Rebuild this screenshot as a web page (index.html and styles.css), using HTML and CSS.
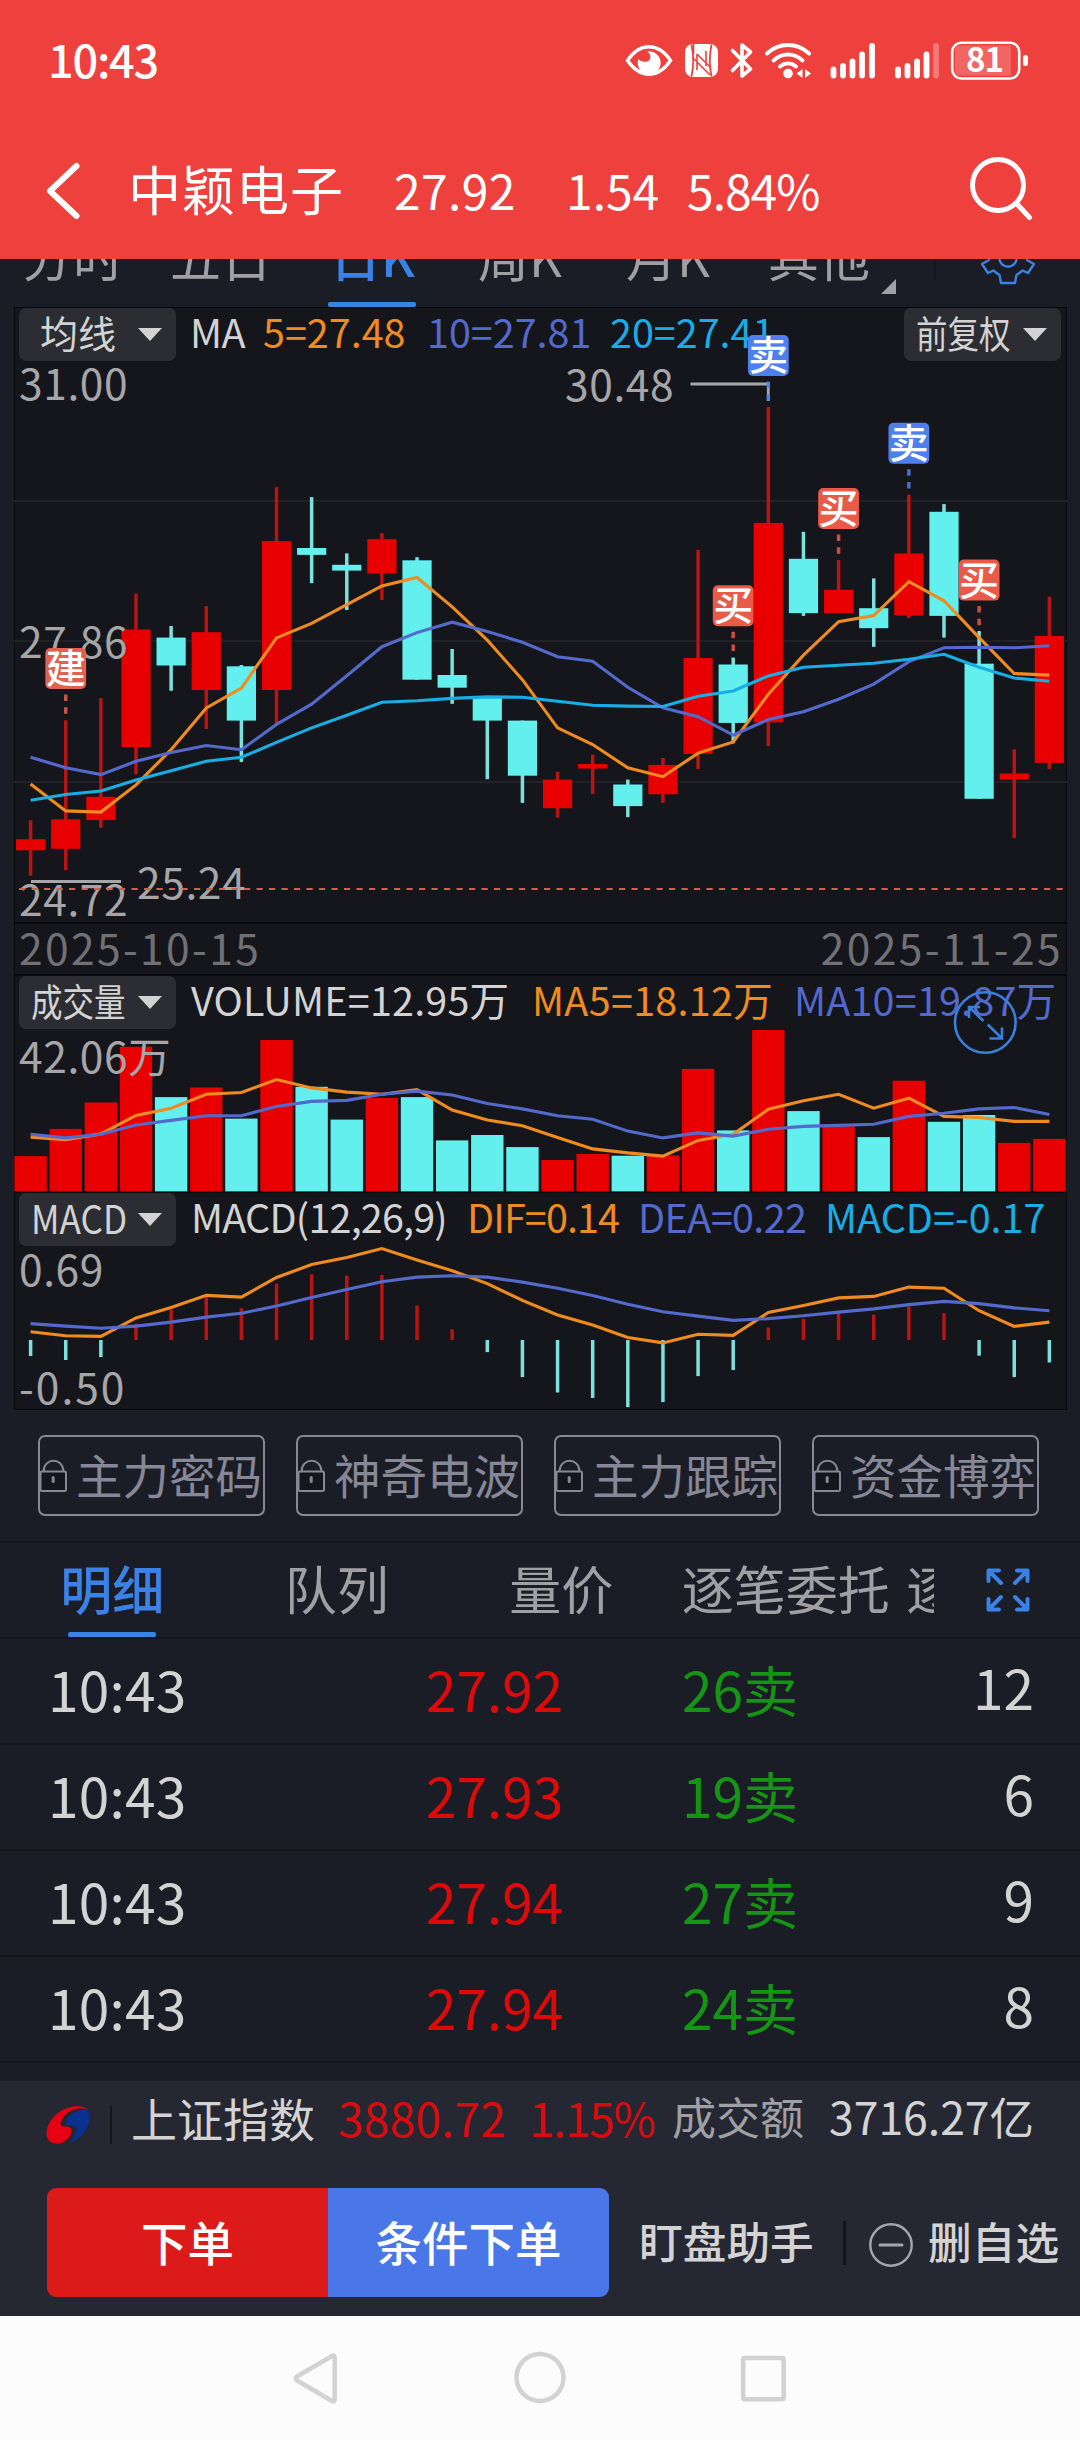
FILE: index.html
```html
<!DOCTYPE html>
<html lang="zh-CN">
<head>
    <meta charset="UTF-8">
    <meta name="viewport" content="width=1080">
    <title>中颖电子 日K</title>
    <link rel="stylesheet" href="styles.css">
</head>
<body>
    <div class="phone">
        <header class="header">
            <div class="status-bar">
                <span class="clock">10:43</span>
                <svg class="status-icons" width="410" height="44" viewBox="620 38 410 44">
                    <!-- eye comfort -->
                    <path d="M627.5 60.5C634 51 641 46.800 649 46.800S664 51 670.500 60.500C664 70 657 74.200 649 74.200S634 70 627.500 60.500Z" fill="none" stroke="#fff" stroke-width="3.400"/>
                    <path d="M647 51.500A11.500 11.500 0 1 1 638.300 59C641 62 647 63 649.500 60C651.500 57 650 53 647 51.500Z" fill="#fff"/>
                    <!-- nfc -->
                    <rect x="685" y="44" width="33" height="33" rx="8" fill="#fff"/>
                    <path d="M691.500 44.500C693.500 54 693.500 67 691.500 76.500M711.500 44.500C709.500 54 709.500 67 711.500 76.500" fill="none" stroke="#ee403d" stroke-width="1.800"/>
                    <path d="M697 54L710 67M693.500 54V44M697 54V70M706 51V66M693 58L710 75" fill="none" stroke="#ee403d" stroke-width="1.600"/>
                    <!-- bluetooth -->
                    <path d="M732.500 50.500L750.500 69L742 76V45L750.500 52L732.500 70.500" fill="none" stroke="#fff" stroke-width="3.600" stroke-linejoin="round" stroke-linecap="round"/>
                    <!-- wifi -->
                    <g fill="none" stroke="#fff" stroke-width="4" stroke-linecap="round">
                        <path d="M767 53.500C779 42 797 42 809 53.500"/>
                        <path d="M773.500 60.500C782 52.500 794 52.500 802.500 60.500"/>
                        <path d="M780 66.500C785 62.500 791 62.500 796 66.500"/>
                    </g>
                    <circle cx="788" cy="73.500" r="4.800" fill="#fff"/>
                    <path d="M802.500 69V78L796.500 73.500ZM805 69V78L811 73.500Z" fill="#fff"/>
                    <!-- signal 1 and 2 -->
                    <g stroke="#fff" stroke-width="5.800" stroke-linecap="round">
                        <path d="M833.500 69.500V75.500M843 66V75.500M852.500 61.500V75.500M862 54.500V75.500M872 46V75.500"/>
                        <path d="M898 69.500V75.500M907.500 66V75.500M917 61.500V75.500M926.500 54.500V75.500"/>
                        <path d="M936 46V75.500" opacity="0.3"/>
                    </g>
                    <!-- battery -->
                    <rect x="952.200" y="42.700" width="67" height="35.800" rx="9" fill="none" stroke="#fff" stroke-width="2.600"/>
                    <path d="M960 45.500H1011V75.500H960Q955 75.500 955 70.500V50.500Q955 45.500 960 45.500Z" fill="#fff" opacity="0.2"/>
                    <rect x="1023" y="55" width="5" height="11" rx="2.500" fill="#fff"/>
                    <text class="battery-text" x="984.500" y="72" text-anchor="middle">81</text>
                </svg>
            </div>
            <div class="title-bar">
                <svg class="back" width="36" height="60" viewBox="0 0 36 60"><path d="M31.500 5L5 30L31.500 55" fill="none" stroke="#fff" stroke-width="6" stroke-linecap="round" stroke-linejoin="round"/></svg>
                <h1 class="stock-name">中颖电子</h1>
                <span class="quote price">27.92</span>
                <span class="quote change">1.54</span>
                <span class="quote percent">5.84%</span>
                <svg class="search" width="68" height="68" viewBox="0 0 68 68"><g fill="none" stroke="#fff" stroke-width="5" stroke-linecap="round"><circle cx="30" cy="29" r="25.500"/><path d="M48.500 47.500L61.500 61.500"/></g></svg>
            </div>
        </header>

        <nav class="period-tabs">
            <span class="period p1">分时</span>
            <span class="period p2">五日</span>
            <span class="period p3 active">日K</span>
            <span class="period p4">周K</span>
            <span class="period p5">月K</span>
            <span class="period p6">其他</span>
            <i class="corner"></i>
            <i class="tab-line"></i>
            <svg class="gear" width="54" height="54" viewBox="-27 -27 54 54">
                <path d="M-7 25H7L8.500 17Q11 15.500 14.500 12.500L20 15L26 6L19 2V-2L26 -6L20 -15L14.500 -12.500Q11 -15.500 8.500 -17L7 -25H-7L-8.500 -17Q-11 -15.500 -14.500 -12.500L-20 -15L-26 -6L-19 -2V2L-26 6L-20 15L-14.500 12.500Q-11 15.500 -8.500 17Z" fill="none" stroke="#3b82e6" stroke-width="2.400" stroke-linejoin="round"/>
                <circle r="8.700" fill="none" stroke="#3b82e6" stroke-width="2.400"/>
            </svg>
        </nav>

        <section class="chart">
            <div class="panel panel-price">
                <div class="panel-head">
                    <button class="dropdown dropdown-ma"><span>均线</span><i class="caret"></i></button>
                    <span class="legend light ma-title">MA</span>
                    <span class="legend orange ma-5">5=27.48</span>
                    <span class="legend indigo ma-10">10=27.81</span>
                    <span class="legend sky">20=27.41</span>
                    <button class="dropdown dropdown-right"><span class="narrow">前复权</span><i class="caret"></i></button>
                </div>
            </div>
            <div class="dates"><span>2025-10-15</span><span class="date-end">2025-11-25</span></div>
            <div class="panel panel-volume">
                <div class="panel-head">
                    <button class="dropdown"><span class="narrow">成交量</span><i class="caret"></i></button>
                    <span class="legend light vol-title">VOLUME=12.95万</span>
                    <span class="legend orange vol-5">MA5=18.12万</span>
                    <span class="legend indigo vol-10">MA10=19.87万</span>
                </div>
            </div>
            <div class="panel panel-macd">
                <div class="panel-head">
                    <button class="dropdown"><span class="narrow macd-name">MACD</span><i class="caret"></i></button>
                    <span class="legend light macd-title">MACD(12,26,9)</span>
                    <span class="legend orange macd-dif">DIF=0.14</span>
                    <span class="legend indigo macd-dea">DEA=0.22</span>
                    <span class="legend sky macd-val">MACD=-0.17</span>
                </div>
            </div>
            <svg id="plot" class="plot" width="1080" height="1103" viewBox="0 307 1080 1103"></svg>
        </section>

        <div class="locked">
            <div class="locked-item"><svg class="lock" width="29" height="34" viewBox="0 0 29 34"><path d="M4.500 12.500C5 -2 24 -2 24.500 12.500" fill="none" stroke="#868797" stroke-width="2"/><rect x="1.500" y="12.500" width="25.500" height="19.500" rx="1.500" fill="#15161b" stroke="#868797" stroke-width="2"/><path d="M14.200 18.500V22.500" stroke="#868797" stroke-width="3" stroke-linecap="round"/></svg><span>主力密码</span></div>
            <div class="locked-item"><svg class="lock" width="29" height="34" viewBox="0 0 29 34"><path d="M4.500 12.500C5 -2 24 -2 24.500 12.500" fill="none" stroke="#868797" stroke-width="2"/><rect x="1.500" y="12.500" width="25.500" height="19.500" rx="1.500" fill="#15161b" stroke="#868797" stroke-width="2"/><path d="M14.200 18.500V22.500" stroke="#868797" stroke-width="3" stroke-linecap="round"/></svg><span>神奇电波</span></div>
            <div class="locked-item"><svg class="lock" width="29" height="34" viewBox="0 0 29 34"><path d="M4.500 12.500C5 -2 24 -2 24.500 12.500" fill="none" stroke="#868797" stroke-width="2"/><rect x="1.500" y="12.500" width="25.500" height="19.500" rx="1.500" fill="#15161b" stroke="#868797" stroke-width="2"/><path d="M14.200 18.500V22.500" stroke="#868797" stroke-width="3" stroke-linecap="round"/></svg><span>主力跟踪</span></div>
            <div class="locked-item"><svg class="lock" width="29" height="34" viewBox="0 0 29 34"><path d="M4.500 12.500C5 -2 24 -2 24.500 12.500" fill="none" stroke="#868797" stroke-width="2"/><rect x="1.500" y="12.500" width="25.500" height="19.500" rx="1.500" fill="#15161b" stroke="#868797" stroke-width="2"/><path d="M14.200 18.500V22.500" stroke="#868797" stroke-width="3" stroke-linecap="round"/></svg><span>资金博弈</span></div>
        </div>

        <nav class="detail-tabs">
            <div class="detail-scroll">
                <span class="detail active">明细</span>
                <span class="detail">队列</span>
                <span class="detail">量价</span>
                <span class="detail">逐笔委托</span>
                <span class="detail">逐笔成交</span>
            </div>
            <svg class="expand" width="44" height="44" viewBox="0 0 44 44">
                <g fill="none" stroke="#3b82e6" stroke-width="4" stroke-linecap="round" stroke-linejoin="round">
                    <path d="M2.500 13V2.500H13M3 3L15 15M31 2.500H41.500V13M41 3L29 15M2.500 31V41.500H13M3 41L15 29M31 41.500H41.500V31M41 41L29 29"/>
                </g>
            </svg>
        </nav>

        <div class="trades">
            <div class="trade"><span class="time">10:43</span><span class="deal">27.92</span><span class="side">26卖</span><span class="count">12</span></div>
            <div class="trade"><span class="time">10:43</span><span class="deal">27.93</span><span class="side">19卖</span><span class="count">6</span></div>
            <div class="trade"><span class="time">10:43</span><span class="deal">27.94</span><span class="side">27卖</span><span class="count">9</span></div>
            <div class="trade"><span class="time">10:43</span><span class="deal">27.94</span><span class="side">24卖</span><span class="count">8</span></div>
        </div>

        <footer class="footer">
            <div class="index-bar">
                <svg class="logo" width="44" height="40" viewBox="0 0 44 40">
                    <path d="M42 5C37 -1 22 0 12 8C3 15 -1 25 1 32C4 41 18 41 24 31C27 25 25 21 20 21.500C14 22 13 19 17 13C22 5 33 1 42 5Z" fill="#e60012"/>
                    <path d="M42 5C35 3 24 8 20.500 15C19 20 22 21 27 20.500C32 21 32 27 24 38C35 34 43 23 43.500 14C43.500 10 43 7 42 5Z" fill="#0a318f"/>
                </svg>
                <i class="index-line"></i>
                <span class="index-name">上证指数</span>
                <span class="index-value">3880.72</span>
                <span class="index-pct">1.15%</span>
                <span class="turnover-name">成交额</span>
                <span class="turnover">3716.27亿</span>
            </div>
            <div class="action-bar">
                <button class="action buy">下单</button>
                <button class="action condition">条件下单</button>
                <span class="link watch">盯盘助手</span>
                <i class="action-line"></i>
                <svg class="minus" width="44" height="44" viewBox="0 0 44 44"><g fill="none" stroke="#a5a5aa" stroke-width="2.400" stroke-linecap="round"><circle cx="22" cy="22" r="20.700"/><path d="M11 22H33" stroke-width="3"/></g></svg>
                <span class="link">删自选</span>
            </div>
        </footer>

        <div class="system-nav">
            <svg width="1080" height="124" viewBox="0 2316 1080 124">
                <g fill="none" stroke="#d2d2d2" stroke-width="4.500" stroke-linejoin="round">
                    <path d="M332 2356Q334.700 2354.500 334.700 2357.500V2399.500Q334.700 2402.500 332 2401L297 2380.500Q294.500 2378.500 297 2376.500Z"/>
                    <circle cx="540" cy="2377.500" r="23.500"/>
                    <rect x="743.200" y="2358" width="40.500" height="41.200" rx="1.500"/>
                </g>
            </svg>
        </div>
    </div>
    <script src="chart.js"></script>
</body>
</html>
```
FILE: styles.css
```css
* {
    margin: 0;
    padding: 0;
    box-sizing: border-box;
}

body {
    background: #1b1d26;
    font-family: "Noto Sans CJK SC", "Noto Sans", sans-serif;
    color: #d3d3d3;
}

button {
    border: none;
    font-family: inherit;
    color: inherit;
}

svg {
    display: block;
    flex: none;
}

.phone {
    width: 1080px;
    height: 2440px;
    overflow: hidden;
    display: flex;
    flex-direction: column;
    white-space: nowrap;
}

/* header */
.header {
    height: 259px;
    background: #ee403d;
    color: #fff;
    flex: none;
}

.status-bar {
    height: 122px;
    padding: 0 50px 0 48px;
    display: flex;
    align-items: center;
    justify-content: space-between;
}

.clock {
    font-size: 45px;
    font-weight: 500;
    line-height: 60px;
    padding-bottom: 5px;
    letter-spacing: -1.2px;
}

.status-icons {
    margin-top: -2px;
}

.battery-text {
    font-size: 33px;
    font-weight: 700;
    letter-spacing: -1px;
    fill: #fff;
}

.title-bar {
    height: 137px;
    display: flex;
    align-items: center;
    padding-left: 45px;
}

.back {
    margin-right: 47px;
}

.stock-name {
    font-size: 53px;
    font-weight: 400;
    line-height: 60px;
    letter-spacing: 1px;
    width: 266px;
    padding-bottom: 5px;
}

.quote {
    font-size: 48px;
    line-height: 60px;
    padding-bottom: 4px;
}

.price {
    width: 172px;
    letter-spacing: 0.4px;
}

.change {
    width: 121px;
}

.percent {
    width: 281px;
    letter-spacing: -1px;
}

.search {
    margin-top: -2px;
}

/* k-line period tabs, scrolled halfway under the header */
.period-tabs {
    height: 48px;
    flex: none;
    display: flex;
    overflow: hidden;
    color: #a0a0a4;
    font-size: 51px;
}

.period {
    position: relative;
    height: 48px;
    flex: none;
    display: flex;
    align-items: flex-end;
    line-height: 64px;
    padding-bottom: 20px;
}

.p1 { width: 150px; padding-left: 22px; }
.p2 { width: 180px; padding-left: 20px; }
.p3 { width: 148px; }
.p4 { width: 148px; }
.p5 { width: 142px; }
.p6 { width: 113px; }

.active {
    color: #3b82e6;
    font-weight: 500;
}

.period.active::after {
    content: "";
    position: absolute;
    left: -2px;
    bottom: 0;
    width: 88px;
    height: 5px;
    border-radius: 2px;
    background: #3b82e6;
}

.corner {
    margin-top: 20px;
    border-left: 15px solid transparent;
    border-bottom: 15px solid #a0a0a4;
    height: 0;
    flex: none;
}

.tab-line {
    width: 2px;
    height: 21px;
    margin-left: 38px;
    background: #15161b;
}

.gear {
    margin: -28px 0 0 45px;
}

/* chart */
.chart {
    position: relative;
    width: 1053px;
    height: 1103px;
    margin: 0 0 0 14px;
    border: 1px solid #08090c;
    background: #15161b;
    flex: none;
}

.panel-price {
    height: 614px;
}

.dates {
    height: 54px;
    border-top: 2px solid #08090c;
    border-bottom: 2px solid #08090c;
    display: flex;
    justify-content: space-between;
    padding: 0 3px 0 4px;
    font-size: 42.500px;
    line-height: 45px;
    letter-spacing: 2.400px;
    color: #717175;
}

.panel-volume {
    height: 217px;
    border-bottom: 2px solid #08090c;
}

.panel-head {
    display: flex;
    align-items: center;
    height: 53px;
    padding-left: 4px;
}

.dropdown {
    width: 157px;
    height: 53px;
    border-radius: 7px;
    background: #2c2d32;
    color: #d3d3d3;
    display: flex;
    align-items: center;
    padding-left: 12px;
    font-size: 38px;
    line-height: 44px;
    flex: none;
}

.dropdown span {
    width: 107px;
    padding-bottom: 5px;
    text-align: left;
}

.dropdown-ma {
    padding-left: 21px;
}

.dropdown-ma span {
    width: 98px;
}

.dropdown .narrow {
    transform: scaleX(0.83);
    transform-origin: 0 50%;
}

.dropdown .macd-name {
    font-size: 39.500px;
    transform: scaleX(0.89);
}

.dropdown-right {
    margin-left: auto;
    margin-right: 5px;
}

.caret {
    border-left: 12.500px solid transparent;
    border-right: 12.500px solid transparent;
    border-top: 13px solid #d3d3d3;
}

.legend {
    font-size: 39.500px;
    line-height: 44px;
    padding-bottom: 7px;
    flex: none;
}

.light { color: #d3d3d3; }
.orange { color: #ef8b1f; }
.indigo { color: #5369cc; }
.sky { color: #19ade6; }

.ma-title {
    width: 73px;
    margin-left: 14px;
    letter-spacing: -0.500px;
}

.ma-5 {
    width: 164px;
}

.ma-10 {
    width: 183px;
}

.vol-title {
    width: 341px;
    margin-left: 15px;
    letter-spacing: 0.200px;
}

.vol-5 {
    width: 262px;
    letter-spacing: 0.300px;
}

.vol-10 {
    letter-spacing: 0.200px;
}

.macd-title {
    width: 276px;
    margin-left: 15px;
    letter-spacing: -0.800px;
}

.macd-dif {
    width: 171px;
    letter-spacing: -0.900px;
}

.macd-dea {
    width: 187px;
    letter-spacing: -0.600px;
}

.plot {
    position: absolute;
    left: -15px;
    top: -1px;
}

.axis-label {
    font-size: 42.500px;
    letter-spacing: 0.600px;
    fill: #a6a6a8;
}

.badge-text {
    font-size: 40px;
    font-weight: 500;
    fill: #fff;
}

/* locked indicators */
.locked {
    height: 131px;
    display: flex;
    gap: 31px;
    padding: 25px 38px 0;
    flex: none;
}

.locked-item {
    width: 227px;
    height: 81px;
    border: 2px solid #868797;
    border-radius: 7px;
    color: #868797;
    font-size: 46.500px;
    line-height: 60px;
    display: flex;
    align-items: center;
    overflow: hidden;
}

.lock {
    margin: 0 8px 0 -1px;
}

.locked-item span {
    padding-bottom: 4px;
}

/* detail tabs */
.detail-tabs {
    height: 98px;
    border-top: 2px solid #14151b;
    border-bottom: 2px solid #14151b;
    display: flex;
    align-items: center;
    flex: none;
}

.detail-scroll {
    width: 934px;
    height: 94px;
    display: flex;
    overflow: hidden;
    color: #a0a0a4;
    font-size: 52px;
    line-height: 89px;
    margin-right: 52px;
}

.detail {
    width: 224.500px;
    text-align: center;
    flex: none;
    position: relative;
}

.detail.active::after {
    content: "";
    position: absolute;
    left: 68px;
    bottom: 0;
    width: 88px;
    height: 5px;
    border-radius: 2px;
    background: #3b82e6;
}

/* trades */
.trades {
    height: 442px;
    flex: none;
}

.trade {
    height: 106px;
    border-bottom: 2px solid #14151b;
    padding: 0 46px 0 48px;
    display: flex;
    font-size: 55px;
    line-height: 98px;
}

.time {
    width: 378px;
    letter-spacing: 0.200px;
}

.deal {
    width: 256px;
    color: #de0909;
}

.side {
    color: #149614;
}

.count {
    margin-left: auto;
    line-height: 95px;
}

/* footer */
.footer {
    height: 235px;
    background: #252733;
    flex: none;
}

.index-bar {
    height: 107px;
    padding: 0 0 0 46px;
    display: flex;
    align-items: flex-start;
    font-size: 46px;
    line-height: 72px;
}

.logo {
    margin: 24px 20px 0 0;
}

.index-line {
    width: 2px;
    height: 38px;
    margin: 25px 19px 0 0;
    background: #14151b;
}

.index-name {
    width: 207px;
}

.index-value {
    width: 191px;
    color: #d60c0f;
    letter-spacing: 0.300px;
}

.index-pct {
    width: 143px;
    color: #d60c0f;
    letter-spacing: -1.200px;
}

.turnover-name {
    width: 157px;
    font-size: 44px;
    line-height: 70px;
    color: #a0a0a4;
}

.turnover {
    font-size: 44.500px;
    line-height: 70px;
}

.action-bar {
    height: 109px;
    padding-left: 47px;
    display: flex;
    align-items: center;
}

.action {
    width: 281px;
    height: 109px;
    font-size: 46.500px;
    font-weight: 500;
    line-height: 60px;
    color: #fff;
    padding-bottom: 4px;
}

.buy {
    background: #dc1a1a;
    border-radius: 9px 0 0 9px;
}

.condition {
    background: #4a77e8;
    border-radius: 0 9px 9px 0;
}

.link {
    font-size: 43.700px;
    line-height: 60px;
    font-weight: 500;
    padding-bottom: 6px;
}

.watch {
    width: 204px;
    margin-left: 30px;
}

.action-line {
    width: 3px;
    height: 44px;
    background: #14151b;
    margin-right: 23px;
}

.minus {
    margin: 4px 15px 0 0;
}

.system-nav {
    height: 124px;
    background: #fcfcfc;
    flex: none;
}
```
FILE: chart.js
```js
const RED = '#e80000';
const CYAN = '#62efee';
const WICK_RED = '#b91414';
const WICK_CYAN = '#7ce0df';

const STEP = 35.13;
const x = i => 30.6 + i * STEP;

// [direction, body top, body bottom, high, low]
const candles = [
    ['u', 839.2, 850.3, 820.1, 875.6], ['u', 819.3, 848.8, 720.2, 870.2], ['u', 796.8, 820.1, 698, 827.8],
    ['u', 629.5, 747, 593.5, 774.2], ['d', 637.6, 665.5, 626, 690.8], ['u', 632.2, 690, 606.2, 729],
    ['d', 666.3, 720.6, 665, 762], ['u', 541.1, 690, 487.2, 723.7], ['d', 548, 554.9, 497.1, 583.2],
    ['d', 564.8, 570.6, 553.4, 610], ['u', 539.2, 573.6, 533.1, 600], ['d', 560.3, 679.7, 557.2, 679.7],
    ['d', 675, 687.7, 649, 703.8], ['d', 698, 720.6, 698, 779.2], ['d', 720.6, 775.7, 720.6, 802.9],
    ['u', 779.6, 808.2, 771.8, 817.6], ['u', 764, 768.6, 754.7, 793.9], ['d', 784.5, 806.1, 779.6, 817.1],
    ['u', 764.9, 794.3, 758, 802.9], ['u', 658, 753.9, 549.8, 769], ['d', 664.5, 722.9, 657.6, 743.3],
    ['u', 522.9, 722.4, 406.9, 746.1], ['d', 558.8, 613.1, 531.8, 615.9], ['u', 589.8, 613.1, 560, 613.1],
    ['d', 608.2, 628.2, 578.4, 646.9], ['u', 553.5, 615.5, 494.7, 618], ['d', 511.8, 615.9, 504.1, 637.6],
    ['d', 663.7, 798.8, 631, 798.8], ['u', 773.5, 779.6, 749.4, 838], ['u', 635.9, 762.9, 596.7, 769]
];

const ma5 = [784.1, 810.9, 812.1, 784.9, 749.7, 708, 688.1, 637.9, 623.4, 604.6, 585.9, 577.5, 606.9, 640.2, 679.7, 727.8, 744.5, 767.8, 776.7, 753.1, 742, 694.3, 655.1, 621.6, 615.5, 581.6, 600.8, 637.6, 673.5, 675.1];
const ma10 = [757.3, 767.7, 774.6, 761.2, 752.4, 745.5, 749.7, 724.4, 704.1, 675.8, 646.7, 632.6, 622.2, 631.4, 642.2, 656.7, 661.2, 687.3, 707.8, 716.7, 735.1, 719.6, 711.8, 699.2, 684.1, 661.6, 647.8, 647.3, 647.8, 645.7];
const ma20 = [800.2, 794.5, 791, 779.9, 770.7, 761.2, 757.3, 742.4, 727.9, 715.2, 702.2, 700.7, 698.4, 696.9, 697.3, 701.2, 705.3, 706.1, 706.5, 696.3, 691, 675.9, 667.3, 665.3, 663.3, 659.2, 654.3, 667.3, 678, 681.2];

const volume = [1156.1, 1128.9, 1102.5, 1046.8, 1097.1, 1087.5, 1118.6, 1040, 1086.8, 1119.6, 1097.9, 1097.1, 1140.4, 1135, 1147.1, 1160, 1153.9, 1155.7, 1155.4, 1068.9, 1130.4, 1030, 1111.1, 1126.1, 1137.1, 1080.7, 1121.8, 1115, 1142.9, 1138.9];
const vol5 = [1137.1, 1139.6, 1133.9, 1115.4, 1108.2, 1094.3, 1092.5, 1079.6, 1087.9, 1092.1, 1094.3, 1089.6, 1110, 1120, 1125.7, 1137.5, 1148.9, 1152.9, 1156.1, 1140.4, 1134.3, 1109.3, 1100.7, 1094.3, 1108.2, 1098.2, 1116.4, 1117.5, 1121.4, 1121.4];
const vol10 = [1134.3, 1137.9, 1134.3, 1125, 1120.4, 1115.7, 1115.7, 1106.4, 1101.4, 1100.4, 1094.3, 1091.1, 1095, 1103.6, 1108.9, 1115.7, 1119.3, 1131.1, 1137.9, 1132.9, 1136.1, 1129.3, 1126.4, 1125.4, 1124.3, 1116.4, 1113.2, 1108.9, 1107.5, 1114.6];

const macd = [1356, 1360, 1357.1, 1323.6, 1309.6, 1296.8, 1308.2, 1283.6, 1274.3, 1275.7, 1275, 1305.4, 1329.3, 1352.1, 1377.1, 1392.5, 1397.9, 1407.1, 1402.1, 1376.1, 1370, 1327.5, 1318.9, 1312.1, 1314.6, 1306.4, 1313.2, 1355.7, 1377.1, 1362.5];
const dif = [1331.8, 1335.7, 1336.4, 1317.9, 1307.5, 1295.4, 1297.1, 1277.5, 1264.6, 1257.5, 1248.6, 1260, 1270.7, 1283.6, 1300.4, 1315, 1325, 1337.5, 1342.9, 1334.3, 1335.4, 1312.5, 1305.4, 1297.9, 1296.4, 1287.1, 1288.2, 1310.7, 1326.4, 1322.1];
const dea = [1323.6, 1326.1, 1328.2, 1326.1, 1322.1, 1317.1, 1313.2, 1306.1, 1297.5, 1289.6, 1281.8, 1277.1, 1275.7, 1277.1, 1282.1, 1288.2, 1295.4, 1304.3, 1311.8, 1316.1, 1320.4, 1318.6, 1315.7, 1312.1, 1308.9, 1304.6, 1301.4, 1303.6, 1307.9, 1310.7];

// [candle index, top, text, color]
const badges = [
    [1, 648, '建', '#e2604e'], [20, 585.3, '买', '#ea5a48'], [21, 335, '卖', '#4d7fee'],
    [23, 488, '买', '#ea5a48'], [25, 422.7, '卖', '#4d7fee'], [27, 559.6, '买', '#ea5a48']
];

const out = [];
const rect = (rx, ry, w, h, fill) => out.push(`<rect x="${rx}" y="${ry}" width="${w}" height="${h}" fill="${fill}"/>`);
const line = (data, color) => out.push(`<polyline points="${data.map((y, i) => x(i).toFixed(1) + ',' + y).join(' ')}" fill="none" stroke="${color}" stroke-width="3.1"/>`);
const label = (lx, ly, text) => out.push(`<text class="axis-label" x="${lx}" y="${ly}">${text}</text>`);

// grid
[500, 640, 781].forEach(y => rect(14, y, 1053, 2, '#212227'));

// candles
candles.forEach(([dir, top, bottom, high, low], i) => {
    const up = dir === 'u';
    rect(x(i) - 1.75, high, 3.5, low - high, up ? WICK_RED : WICK_CYAN);
    rect(x(i) - 14.6, top, 29.2, bottom - top, up ? RED : CYAN);
});
line(ma5, '#ef8b1f');
line(ma10, '#5369cc');
line(ma20, '#19ade6');

// volume
volume.forEach((top, i) => rect(x(i) - 16.2, top, 32.4, 1191.4 - top, candles[i][0] === 'u' ? RED : CYAN));
line(vol5, '#ef8b1f');
line(vol10, '#5369cc');

// macd
macd.forEach((y, i) => {
    if (y < 1340) rect(x(i) - 1.75, y, 3.5, 1340 - y, WICK_RED);
    else rect(x(i) - 1.75, 1340, 3.5, y - 1340, WICK_CYAN);
});
line(dif, '#ef8b1f');
line(dea, '#5369cc');

// high and low marks
out.push('<path d="M690.500 384H768.300V401M31 881.500H121" fill="none" stroke="#a6a6a8" stroke-width="2.800"/>');
label(19, 400, '31.00');
label(565, 400.5, '30.48');
label(19, 657.5, '27.86');
label(19, 915.5, '24.72');
label(137, 898.5, '25.24');
label(19, 1073, '42.06万');
label(19, 1286, '0.69');
out.push('<text class="axis-label" x="19" y="1403.5" textLength="106">-0.50</text>');
out.push('<path d="M19 889H1064" stroke="#d0604f" stroke-width="2" stroke-dasharray="6.200 6.300"/>');

// trade badges
badges.forEach(([i, top, text, color]) => {
    const cx = x(i);
    out.push(`<path d="M${cx} ${top + 46.5}v20" stroke="${color}" opacity="0.85" stroke-width="3.500" stroke-dasharray="6.500 6.200"/>`);
    out.push(`<rect x="${cx - 20.4}" y="${top}" width="40.8" height="41" rx="5" fill="${color}"/>`);
    out.push(`<text class="badge-text" x="${cx}" y="${top + 35}" text-anchor="middle">${text}</text>`);
});

// fullscreen button
out.push('<g fill="none" stroke="#3b7fdc" stroke-width="2.600"><circle cx="985.300" cy="1022.500" r="30.300"/><path d="M983.500 1021L969 1007M969 1018V1007H980M987.700 1024.500L1002 1038.500M1002 1027.500V1038.500H989.500"/></g>');

document.getElementById('plot').innerHTML = out.join('');
```
